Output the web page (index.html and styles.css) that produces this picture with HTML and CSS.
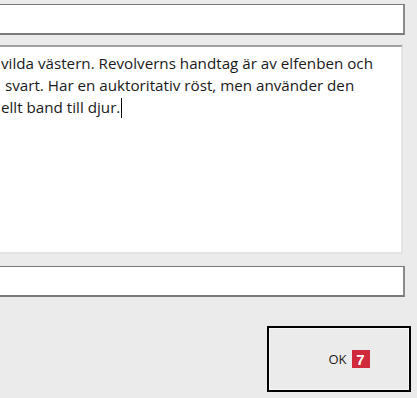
FILE: index.html
```html
<!DOCTYPE html>
<html lang="sv">
<head>
<meta charset="utf-8">
<link rel="stylesheet" href="styles.css">
</head>
<body>
<div class="dialog">
  <div class="field input"></div>
  <div class="field textarea">
    <div class="line">vilda västern. Revolverns handtag är av elfenben och</div>
    <div class="line"> svart. Har en auktoritativ röst, men använder den</div>
    <div class="line">ellt band till djur.<span class="caret"></span></div>
  </div>
  <div class="field input"></div>
  <div class="actions">
    <button class="ok">OK <span class="badge">7</span></button>
  </div>
</div>
</body>
</html>
```
FILE: styles.css
```css
html, body {
  margin: 0;
  padding: 0;
  background: #ebebeb;
  width: 417px;
  height: 398px;
  overflow: hidden;
}
.dialog {
  display: flex;
  flex-direction: column;
  padding: 4px 12px 0 0;
  margin-left: -20px;
}
.field {
  background: #ffffff;
  box-sizing: border-box;
}
.input {
  height: 31px;
  border: 1px solid #7a7a7a;
  border-right-width: 2px;
  border-bottom-width: 2px;
  border-right-color: #8a8a8a;
}
.textarea {
  margin-top: 10px;
  margin-right: 2px;
  height: 209px;
  border-top: 2px solid #a0a0a0;
  border-right: 2px solid #e3e3e3;
  border-bottom: 2px solid #e3e3e3;
  padding: 5px 0 0 21px;
  font-family: "Open Sans", "Noto Sans", sans-serif;
  font-size: 15.2px;
  line-height: 22px;
  color: #1a1a1a;
}
.textarea + .input {
  margin-top: 12px;
}
.line {
  white-space: pre;
}
.caret {
  display: inline-block;
  width: 1px;
  height: 20px;
  background: #000;
  vertical-align: -5px;
  margin-left: 1px;
}
.actions {
  display: flex;
  justify-content: flex-end;
  margin-top: 29px;
  margin-right: -6px;
}
.ok {
  width: 144px;
  height: 66px;
  box-sizing: border-box;
  border: 2px solid #000;
  box-shadow: inset 0 0 0 1px #f8f8f8;
  background: #ebebeb;
  display: flex;
  align-items: center;
  justify-content: center;
  padding: 0 0 0 20px;
  font-family: "Open Sans", "Noto Sans", sans-serif;
  font-size: 13px;
  color: #1a1a1a;
  gap: 5px;
}
.badge {
  display: inline-flex;
  align-items: center;
  justify-content: center;
  width: 18px;
  height: 18px;
  background: #d0293b;
  color: #fff;
  font-weight: 700;
  font-size: 15px;
  font-family: "Liberation Sans", Arial, sans-serif;
}
```
